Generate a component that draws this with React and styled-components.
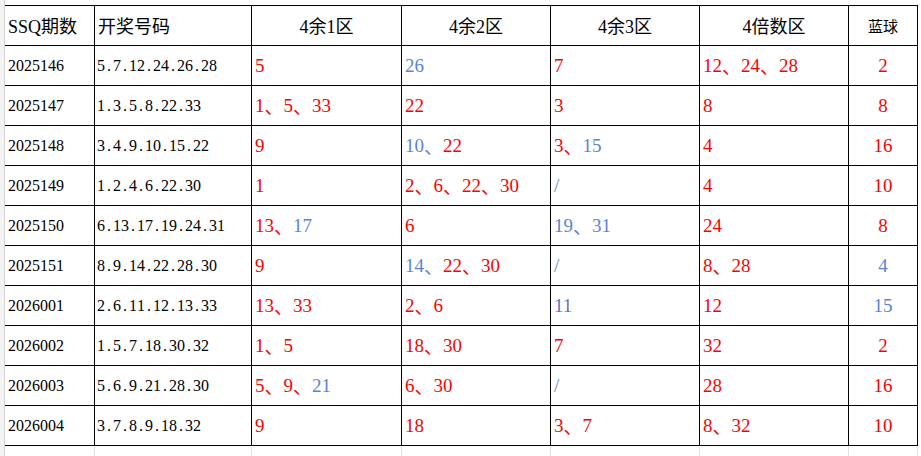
import React from "react";
import styled, { createGlobalStyle } from "styled-components";

const GlobalStyle = createGlobalStyle`
  body {
    margin: 0;
    background: #ffffff;
  }
`;

const colors = {
  r: "#ff0000",
  b: "#5a83d8",
  p: "#6e6ec8",
};

const columns = "90px 157px 150px 149px 149px 149px 69px";

const Page = styled.div`
  display: flex;
  width: 921px;
  height: 456px;
  overflow: hidden;
`;

const Gutter = styled.div`
  width: 4px;
  flex-shrink: 0;
  background: #f3f3f3;
  border-right: 1px solid #d6d6d6;
`;

const Sheet = styled.div`
  padding-top: 5px;
`;

const Grid = styled.div`
  display: grid;
  grid-template-columns: ${columns};
  grid-auto-rows: 40px;
  border-top: 1px solid #000;
`;

const Cell = styled.div`
  box-sizing: border-box;
  display: flex;
  align-items: center;
  justify-content: ${(p) => (p.$center ? "center" : "flex-start")};
  padding: 0 3px;
  border-right: 1px solid #000;
  border-bottom: 1px solid #000;
  white-space: nowrap;
  overflow: hidden;
`;

const HeadCell = styled(Cell)`
  font-family: "Liberation Serif", "Noto Sans CJK SC", serif;
  font-size: 18px;
  color: #000;
  padding-bottom: ${(p) => (p.$sans ? "0" : "2px")};
  ${(p) =>
    p.$sans &&
    `font-family: "Noto Sans CJK SC", sans-serif; font-size: 15px;`}
`;

const PlainCell = styled(Cell)`
  font-family: "Liberation Serif", serif;
  font-size: 16px;
  color: #000;
  padding-left: ${(p) => (p.$first ? "3px" : "2px")};
`;

// half-width cells, like the spreadsheet's song-style font
const Char = styled.span`
  display: inline-block;
  width: 8px;
  text-align: center;
`;

const NumCell = styled(Cell)`
  font-family: "Liberation Serif", "Noto Sans CJK SC", serif;
  font-size: 19px;
`;

const Num = styled.span`
  color: ${(p) => colors[p.$c]};
`;

const Sep = styled.span`
  color: ${(p) => colors[p.$c]};
  font-family: "Noto Sans CJK SC", sans-serif;
`;

const Filler = styled.div`
  display: grid;
  grid-template-columns: ${columns};
  height: 12px;
`;

const FillerCell = styled.div`
  border-right: 1px solid #e2e2e2;
`;

// each number is "value:color", joined with 、 in the cell
const rows = [
  ["2025146", "5.7.12.24.26.28", ["5:r"], ["26:b"], ["7:r"], ["12:r", "24:r", "28:r"], "2:r"],
  ["2025147", "1.3.5.8.22.33", ["1:r", "5:r", "33:r"], ["22:r"], ["3:r"], ["8:r"], "8:r"],
  ["2025148", "3.4.9.10.15.22", ["9:r"], ["10:b", "22:r"], ["3:r", "15:b"], ["4:r"], "16:r"],
  ["2025149", "1.2.4.6.22.30", ["1:r"], ["2:r", "6:r", "22:r", "30:r"], ["/:b"], ["4:r"], "10:r"],
  ["2025150", "6.13.17.19.24.31", ["13:r", "17:b"], ["6:r"], ["19:b", "31:b"], ["24:r"], "8:r"],
  ["2025151", "8.9.14.22.28.30", ["9:r"], ["14:b", "22:r", "30:r"], ["/:b"], ["8:r", "28:r"], "4:b"],
  ["2026001", "2.6.11.12.13.33", ["13:r", "33:r"], ["2:r", "6:r"], ["11:p"], ["12:r"], "15:b"],
  ["2026002", "1.5.7.18.30.32", ["1:r", "5:r"], ["18:r", "30:r"], ["7:r"], ["32:r"], "2:r"],
  ["2026003", "5.6.9.21.28.30", ["5:r", "9:r", "21:b"], ["6:r", "30:r"], ["/:b"], ["28:r"], "16:r"],
  ["2026004", "3.7.8.9.18.32", ["9:r"], ["18:r"], ["3:r", "7:r"], ["8:r", "32:r"], "10:r"],
];

const split = (item) => item.split(":");

const Mono = ({ text }) =>
  text.split("").map((ch, i) => <Char key={i}>{ch}</Char>);

const Numbers = ({ items }) =>
  items.map((item, i) => {
    const [v, c] = split(item);
    return (
      <React.Fragment key={i}>
        <Num $c={c}>{v}</Num>
        {i < items.length - 1 && <Sep $c={c}>、</Sep>}
      </React.Fragment>
    );
  });

export default function App() {
  return (
    <>
      <GlobalStyle />
      <Page>
        <Gutter />
        <Sheet>
          <Grid>
            <HeadCell>SSQ期数</HeadCell>
            <HeadCell>开奖号码</HeadCell>
            <HeadCell $center>4余1区</HeadCell>
            <HeadCell $center>4余2区</HeadCell>
            <HeadCell $center>4余3区</HeadCell>
            <HeadCell $center>4倍数区</HeadCell>
            <HeadCell $center $sans>
              蓝球
            </HeadCell>
            {rows.map((row) => {
              const [blue, bc] = split(row[6]);
              return (
                <React.Fragment key={row[0]}>
                  <PlainCell $first>
                    <Mono text={row[0]} />
                  </PlainCell>
                  <PlainCell>
                    <Mono text={row[1]} />
                  </PlainCell>
                  <NumCell>
                    <Numbers items={row[2]} />
                  </NumCell>
                  <NumCell>
                    <Numbers items={row[3]} />
                  </NumCell>
                  <NumCell>
                    <Numbers items={row[4]} />
                  </NumCell>
                  <NumCell>
                    <Numbers items={row[5]} />
                  </NumCell>
                  <NumCell $center>
                    <Num $c={bc}>{blue}</Num>
                  </NumCell>
                </React.Fragment>
              );
            })}
          </Grid>
          <Filler>
            {Array.from({ length: 7 }).map((_, i) => (
              <FillerCell key={i} />
            ))}
          </Filler>
        </Sheet>
      </Page>
    </>
  );
}
